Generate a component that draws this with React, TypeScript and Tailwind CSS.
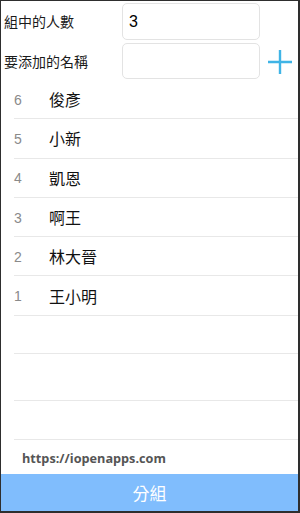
import React from 'react';

const names = [
  { no: 6, name: '俊彥' },
  { no: 5, name: '小新' },
  { no: 4, name: '凱恩' },
  { no: 3, name: '啊王' },
  { no: 2, name: '林大晉' },
  { no: 1, name: '王小明' },
];

const cjk = { fontFamily: '"Noto Sans CJK TC", "Noto Sans CJK SC", sans-serif' };
const nameFont = { fontFamily: '"Noto Sans CJK SC", "Noto Sans CJK TC", sans-serif' };
const latin = { fontFamily: '"Liberation Sans", Arial, sans-serif' };

const App: React.FC = () => {
  return (
    <div
      className="w-[300px] h-[513px] box-border bg-white border-t border-l border-r-2 border-b-2 border-[#2e2e2e] flex flex-col overflow-hidden antialiased"
      style={cjk}
    >
      {/* 表單 */}
      <div className="pt-[2px] flex flex-col gap-[3px]">
        <div className="flex items-center h-[37px]">
          <span className="w-[121px] pl-[3px] text-[14px] text-[#1a1a1a]">組中的人數</span>
          <div
            className="w-[138px] h-[37px] rounded-[5px] border border-[#e3e3e3] flex items-center pl-[6px] text-[16px] text-black"
            style={latin}
          >
            3
          </div>
        </div>
        <div className="flex items-center h-[36px]">
          <span className="w-[121px] pl-[3px] text-[14px] text-[#1a1a1a]">要添加的名稱</span>
          <div className="w-[138px] h-[36px] rounded-[5px] border border-[#e3e3e3]" />
          <svg className="ml-[8px] mt-[2px]" width="24" height="24" viewBox="0 0 24 24">
            <path d="M12 0v24M0 12h24" stroke="#3fb4e6" strokeWidth="2.4" fill="none" />
          </svg>
        </div>
      </div>

      {/* 名單 */}
      <div className="flex-1 pl-[13px] mt-[1px]">
        {names.map((n) => (
          <div key={n.no} className="h-[39.3px] flex items-center border-b border-[#e8e8e8]">
            <span className="w-[35px] text-[14px] text-[#8a8a8a] pt-[2px]" style={latin}>
              {n.no}
            </span>
            <span className="text-[16px] text-[#111111]" style={nameFont}>
              {n.name}
            </span>
          </div>
        ))}
        <div className="h-[38.5px] border-b border-[#e8e8e8]" />
        <div className="h-[46.7px] border-b border-[#e8e8e8]" />
        <div className="h-[39px] border-b border-[#e8e8e8]" />
      </div>

      <div className="h-[34px] flex items-center pl-[21px] pt-[4px]">
        <span className="text-[12.7px] font-bold text-[#555]" style={{ fontFamily: '"Open Sans", sans-serif' }}>
          https://iopenapps.com
        </span>
      </div>
      <div className="h-[37px] bg-[#80bdfd] flex items-center justify-center">
        <span className="text-[17px] text-white">分組</span>
      </div>
    </div>
  );
};

export default App;
